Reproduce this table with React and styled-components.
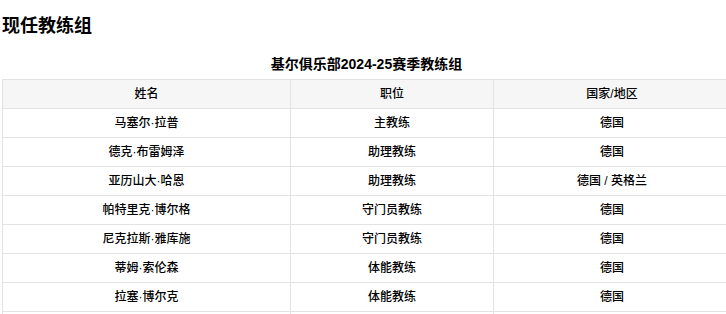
import React from "react";
import styled, { createGlobalStyle } from "styled-components";

const GlobalStyle = createGlobalStyle`
  html, body {
    margin: 0;
    padding: 0;
    overflow: hidden;
    background: #fff;
  }
  body {
    font-family: "Liberation Sans", "Noto Sans CJK SC", sans-serif;
    color: #000;
  }
`;

const coaches = [
    { name: "马塞尔·拉普", role: "主教练", nation: "德国" },
    { name: "德克·布雷姆泽", role: "助理教练", nation: "德国" },
    { name: "亚历山大·哈恩", role: "助理教练", nation: "德国 / 英格兰" },
    { name: "帕特里克·博尔格", role: "守门员教练", nation: "德国" },
    { name: "尼克拉斯·雅库施", role: "守门员教练", nation: "德国" },
    { name: "蒂姆·索伦森", role: "体能教练", nation: "德国" },
    { name: "拉塞·博尔克", role: "体能教练", nation: "德国" },
];

const App = () => {
    return (
        <Page>
            <GlobalStyle />
            <Title>现任教练组</Title>
            <Table>
                <Caption>基尔俱乐部2024-25赛季教练组</Caption>
                <colgroup>
                    <col style={{ width: 288 }} />
                    <col style={{ width: 203 }} />
                    <col />
                </colgroup>
                <thead>
                    <Row>
                        <Th>姓名</Th>
                        <Th>职位</Th>
                        <Th>国家/地区</Th>
                    </Row>
                </thead>
                <tbody>
                    {coaches.map((c, idx) => (
                        <Row key={idx}>
                            <Td>{c.name}</Td>
                            <Td>{c.role}</Td>
                            <Td>{c.nation}</Td>
                        </Row>
                    ))}
                    <Row>
                        <Td>&nbsp;</Td>
                        <Td>&nbsp;</Td>
                        <Td>&nbsp;</Td>
                    </Row>
                </tbody>
            </Table>
        </Page>
    );
};

const Page = styled.div`
  padding: 14px 0 0 2px;
  width: 760px;
`

const Title = styled.h2`
  margin: 0 0 14px;
  font-size: 18px;
  line-height: 24px;
  font-weight: 700;
`

const Table = styled.table`
  width: 729px;
  border-collapse: collapse;
  table-layout: fixed;
  font-size: 12px;
`

const Caption = styled.caption`
  font-size: 14px;
  font-weight: 700;
  line-height: 20px;
  padding: 2px 0 5px;
`

const Row = styled.tr`
  height: 29px;
`

const Th = styled.th`
  padding: 0 8px;
  line-height: 14px;
  border: 1px solid #e3e3e3;
  background: #f6f6f6;
  font-weight: 500;
  text-align: center;
`

const Td = styled.td`
  padding: 0 8px;
  line-height: 14px;
  border: 1px solid #e3e3e3;
  font-weight: 500;
  text-align: center;
`

export default App;
